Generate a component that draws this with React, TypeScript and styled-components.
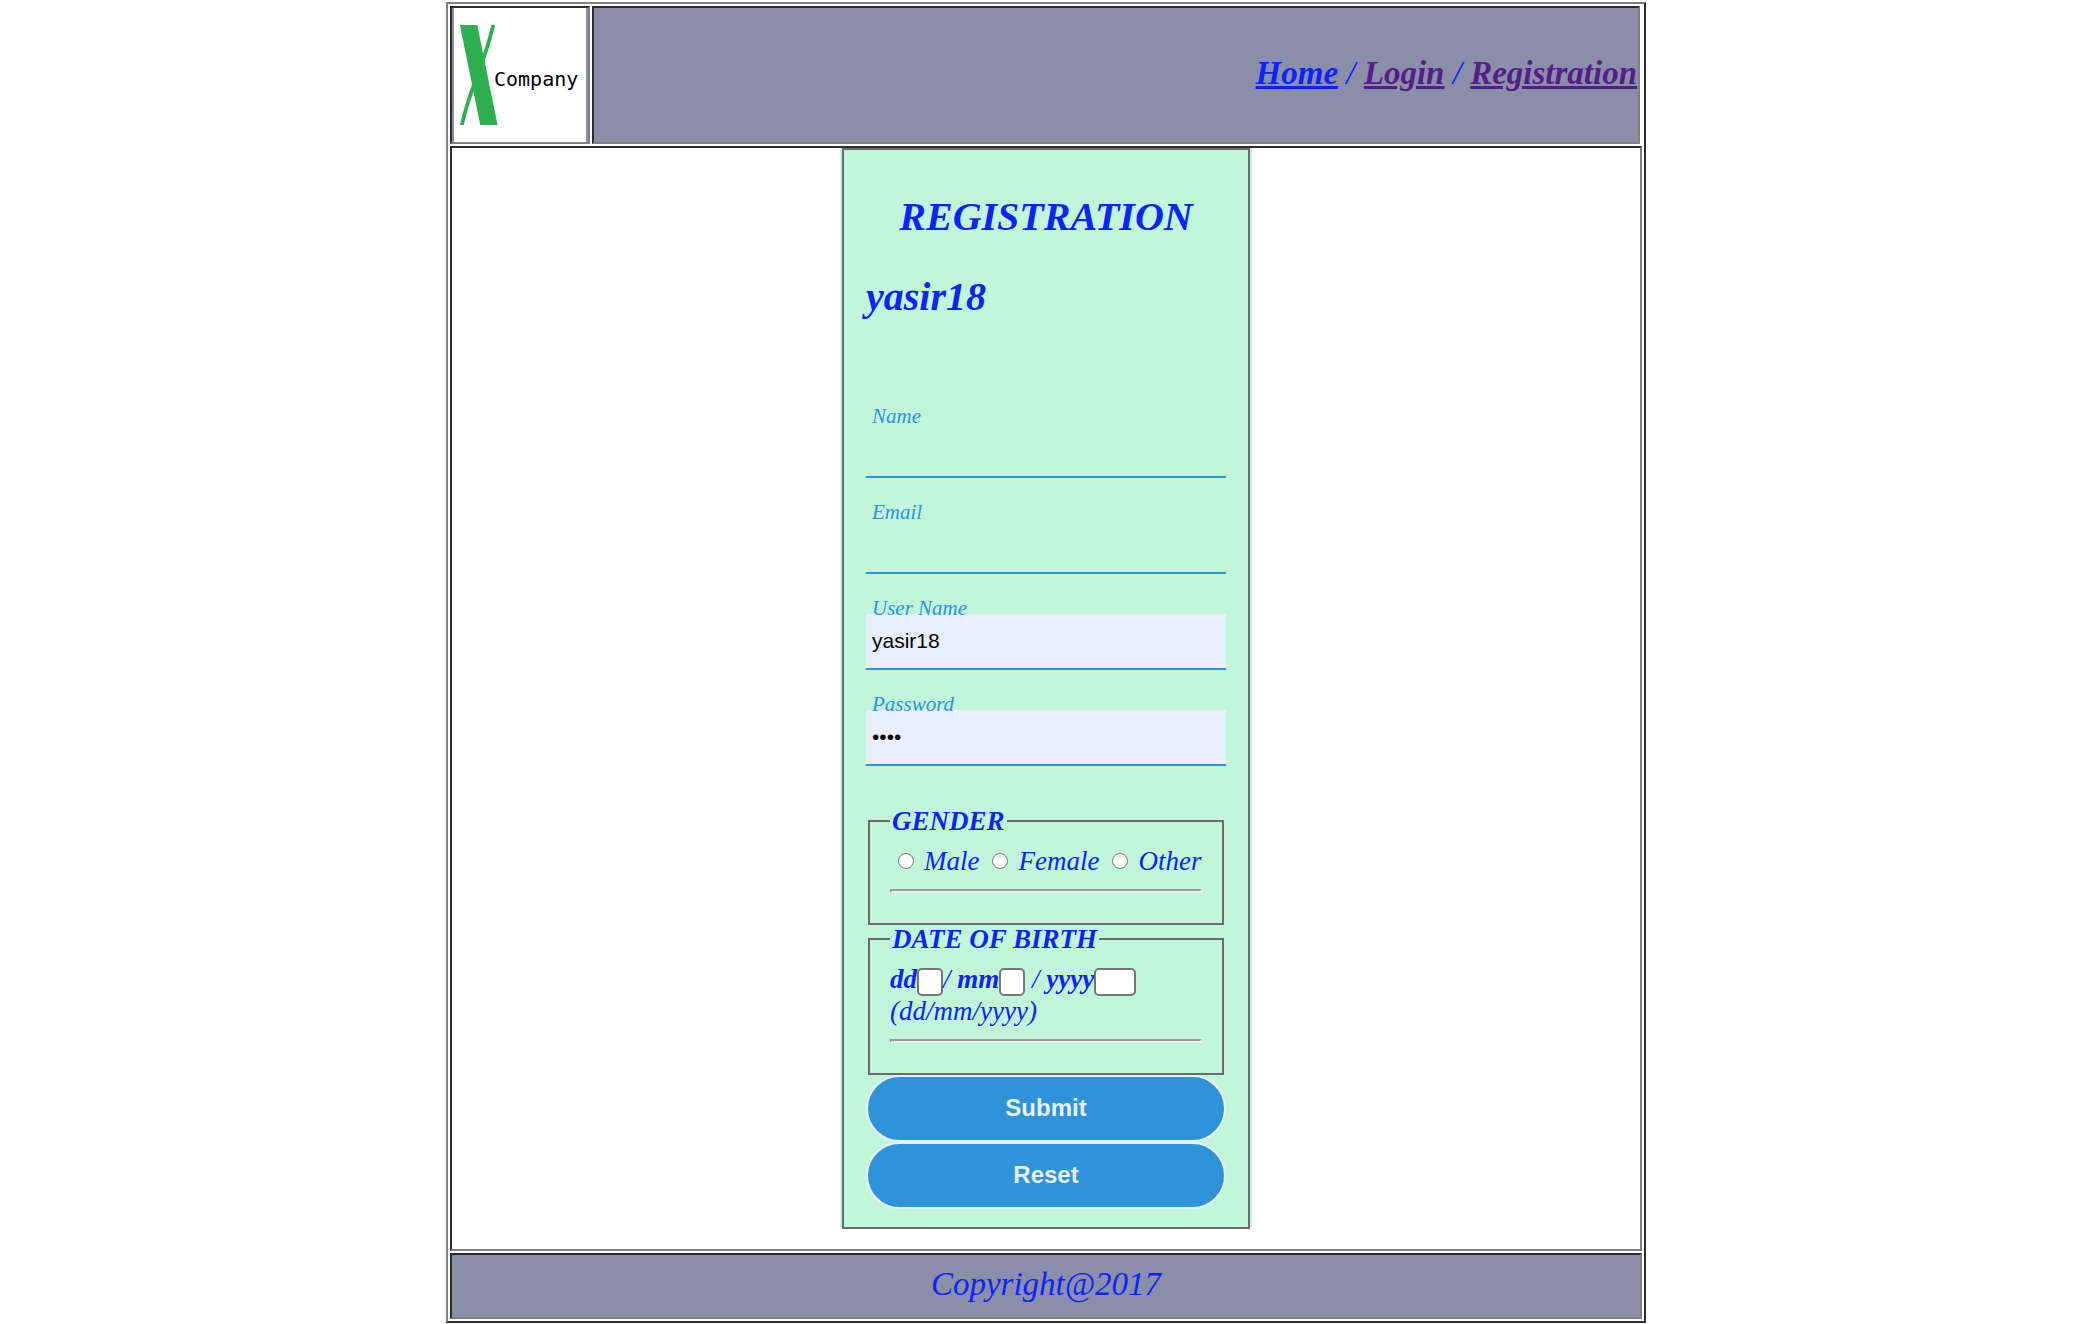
import React from "react";
import styled, { createGlobalStyle, css } from "styled-components";

const color = {
  ink: "#0b24fb",
  visited: "#551d89",
  bar: "#8b8ea9",
  mint: "#c1f6db",
  sky: "#2e93d9",
  pale: "#e8f0fd",
  frame: "#6b6b6b",
  light: "#808080",
  dark: "#2c2c2c",
};

const sans = `"Liberation Sans", Arial, sans-serif`;

const GlobalStyle = createGlobalStyle`
  *, *::before, *::after { box-sizing: border-box; }
  body {
    margin: 0;
    padding-left: 8px;
    background: #fff;
    color: ${color.ink};
    font-family: "Liberation Serif", "Times New Roman", serif;
    font-style: italic;
    font-size: 27px;
    line-height: 32px;
  }
`;

const inset = css`
  border: 2px solid;
  border-color: ${color.dark} ${color.light} ${color.light} ${color.dark};
`;

const Page = styled.div`
  display: flex;
  flex-direction: column;
  gap: 2px;
  max-width: 1200px;
  margin: 2px auto 0;
  padding: 2px;
  border: 2px solid;
  border-color: ${color.light} ${color.dark} ${color.dark} ${color.light};
`;

const Header = styled.header`
  display: flex;
  gap: 2px;
  padding-right: 2px;
`;

const LogoCell = styled.div`
  ${inset}
  background: ${color.bar};
  padding: 0 2px;
`;

const Logo = styled.div`
  display: flex;
  align-items: center;
  width: 132px;
  height: 134px;
  padding-left: 6px;
  background: #fff;
`;

const LogoMark = styled.svg`
  display: block;
  flex: none;
  width: 38px;
  height: 100px;
`;

const LogoName = styled.span`
  margin-left: -4px;
  padding-top: 8px;
  color: #000;
  font: normal 400 20px/24px "DejaVu Sans Mono", monospace;
`;

const Nav = styled.nav`
  ${inset}
  flex: 1;
  display: flex;
  align-items: center;
  justify-content: flex-end;
  padding: 0 1px 4px 0;
  background: ${color.bar};
  font-size: 33px;
  line-height: 38px;
  white-space: pre;
`;

const NavLink = styled.a<{ $visited?: boolean }>`
  color: ${(p) => (p.$visited ? color.visited : color.ink)};
  font-weight: bold;
`;

const Main = styled.main`
  ${inset}
  display: flex;
  justify-content: center;
  padding-bottom: 22px;
`;

const Card = styled.div`
  display: flex;
  width: 412px;
  padding: 0 2px;
  background: ${color.mint};
`;

const Form = styled.form`
  flex: 1;
  min-width: 0;
  margin-bottom: -2px;
  padding: 10px 22px 18px;
  border: 2px solid ${color.frame};
`;

const Title = styled.h2<{ $center?: boolean }>`
  margin: 34px 0;
  font-size: 40px;
  line-height: 46px;
  text-align: ${(p) => (p.$center ? "center" : "left")};
`;

const Fields = styled.div`
  padding-top: 28px;
`;

const Field = styled.div`
  display: flex;
  flex-direction: column;
  padding-top: 22px;
`;

const FieldLabel = styled.label`
  z-index: 1;
  margin-bottom: -6px;
  padding-left: 6px;
  color: ${color.sky};
  font-size: 21px;
  line-height: 24px;
`;

const TextBox = styled.input<{ $filled?: boolean }>`
  width: 100%;
  height: 56px;
  padding: 0 6px;
  border: 0;
  border-bottom: 2px solid ${color.sky};
  border-radius: 0;
  outline: none;
  background: ${(p) => (p.$filled ? color.pale : "transparent")};
  color: #000;
  font: normal 21px/24px ${sans};
`;

const Groups = styled.div`
  padding-top: 41px;
`;

const Group = styled.fieldset`
  min-width: 0;
  margin: 0 2px;
  padding: 10px 20px 30px;
  border: 2px solid ${color.frame};
`;

const Legend = styled.legend`
  padding: 0 2px;
  font-weight: bold;
  line-height: 28px;
`;

const Choices = styled.div`
  display: flex;
  gap: 13px;
  padding-left: 8px;
`;

const Choice = styled.label`
  display: flex;
  align-items: center;
  gap: 10px;
`;

const Radio = styled.input`
  appearance: none;
  flex: none;
  width: 16px;
  height: 16px;
  margin: 0;
  border: 1px solid #767676;
  border-radius: 50%;
  background: #fff;

  &:checked {
    border: 5px solid ${color.sky};
  }
`;

const Rule = styled.hr`
  height: 4px;
  margin: 12px 0 0;
  border: 2px solid;
  border-color: #9a9a9a #eee #eee #9a9a9a;
`;

const DateLabel = styled.label`
  font-weight: bold;
`;

const DateBox = styled.input<{ $wide?: boolean }>`
  width: ${(p) => (p.$wide ? 42 : 26)}px;
  height: 28px;
  margin: 0;
  padding: 0 2px;
  border: 2px solid #767676;
  border-radius: 5px;
  background: #fff;
  font: 13px/16px ${sans};
  vertical-align: middle;
`;

const DateRow = styled.div`
  height: 32px;
  white-space: nowrap;
`;

const PillButton = styled.button`
  display: block;
  width: 100%;
  height: 67px;
  padding: 0 6px 2px;
  border: 2px solid ${color.pale};
  border-radius: 34px;
  background: ${color.sky};
  color: ${color.pale};
  font: bold 24px/28px ${sans};
`;

const Footer = styled.footer`
  ${inset}
  padding: 10px 0 14px;
  background: ${color.bar};
  font-size: 33px;
  line-height: 38px;
  text-align: center;
`;

const fields = [
  { id: "name", label: "Name", type: "text", value: "" },
  { id: "email", label: "Email", type: "email", value: "" },
  { id: "username", label: "User Name", type: "text", value: "yasir18" },
  { id: "password", label: "Password", type: "password", value: "1234" },
];

const genders = ["Male", "Female", "Other"];

export default function App() {
  return (
    <>
      <GlobalStyle />
      <Page>
        <Header>
          <LogoCell>
            <Logo>
              <LogoMark viewBox="0 0 38 100" aria-hidden="true">
                <line x1="4.5" y1="-20" x2="33" y2="120" stroke="#2eb050" strokeWidth="17" />
                <path d="M35 -8 C25 42 11 55 0 108" fill="none" stroke="#2eb050" strokeWidth="3.8" />
              </LogoMark>
              <LogoName>Company</LogoName>
            </Logo>
          </LogoCell>
          <Nav>
            <NavLink href="#home">Home</NavLink>
            {" / "}
            <NavLink href="#login" $visited>Login</NavLink>
            {" / "}
            <NavLink href="#registration" $visited>Registration</NavLink>
          </Nav>
        </Header>

        <Main>
          <Card>
            <Form onSubmit={(e) => e.preventDefault()}>
              <Title $center>REGISTRATION</Title>
              <Title>yasir18</Title>

              <Fields>
                {fields.map((f) => (
                  <Field key={f.id}>
                    <FieldLabel htmlFor={f.id}>{f.label}</FieldLabel>
                    <TextBox id={f.id} name={f.id} type={f.type} defaultValue={f.value} $filled={f.value !== ""} />
                  </Field>
                ))}
              </Fields>

              <Groups>
                <Group>
                  <Legend>GENDER</Legend>
                  <Choices>
                    {genders.map((g) => (
                      <Choice key={g}>
                        <Radio type="radio" name="gender" value={g} />
                        {g}
                      </Choice>
                    ))}
                  </Choices>
                  <Rule />
                </Group>

                <Group>
                  <Legend>DATE OF BIRTH</Legend>
                  <DateRow>
                    <DateLabel htmlFor="day">dd</DateLabel>
                    <DateBox id="day" type="text" />
                    {"/ "}
                    <DateLabel htmlFor="month">mm</DateLabel>
                    <DateBox id="month" type="text" />
                    {" / "}
                    <DateLabel htmlFor="year">yyyy</DateLabel>
                    <DateBox id="year" type="text" $wide />
                  </DateRow>
                  <DateRow>(dd/mm/yyyy)</DateRow>
                  <Rule />
                </Group>
              </Groups>

              <PillButton type="submit">Submit</PillButton>
              <PillButton type="reset">Reset</PillButton>
            </Form>
          </Card>
        </Main>

        <Footer>Copyright@2017</Footer>
      </Page>
    </>
  );
}
